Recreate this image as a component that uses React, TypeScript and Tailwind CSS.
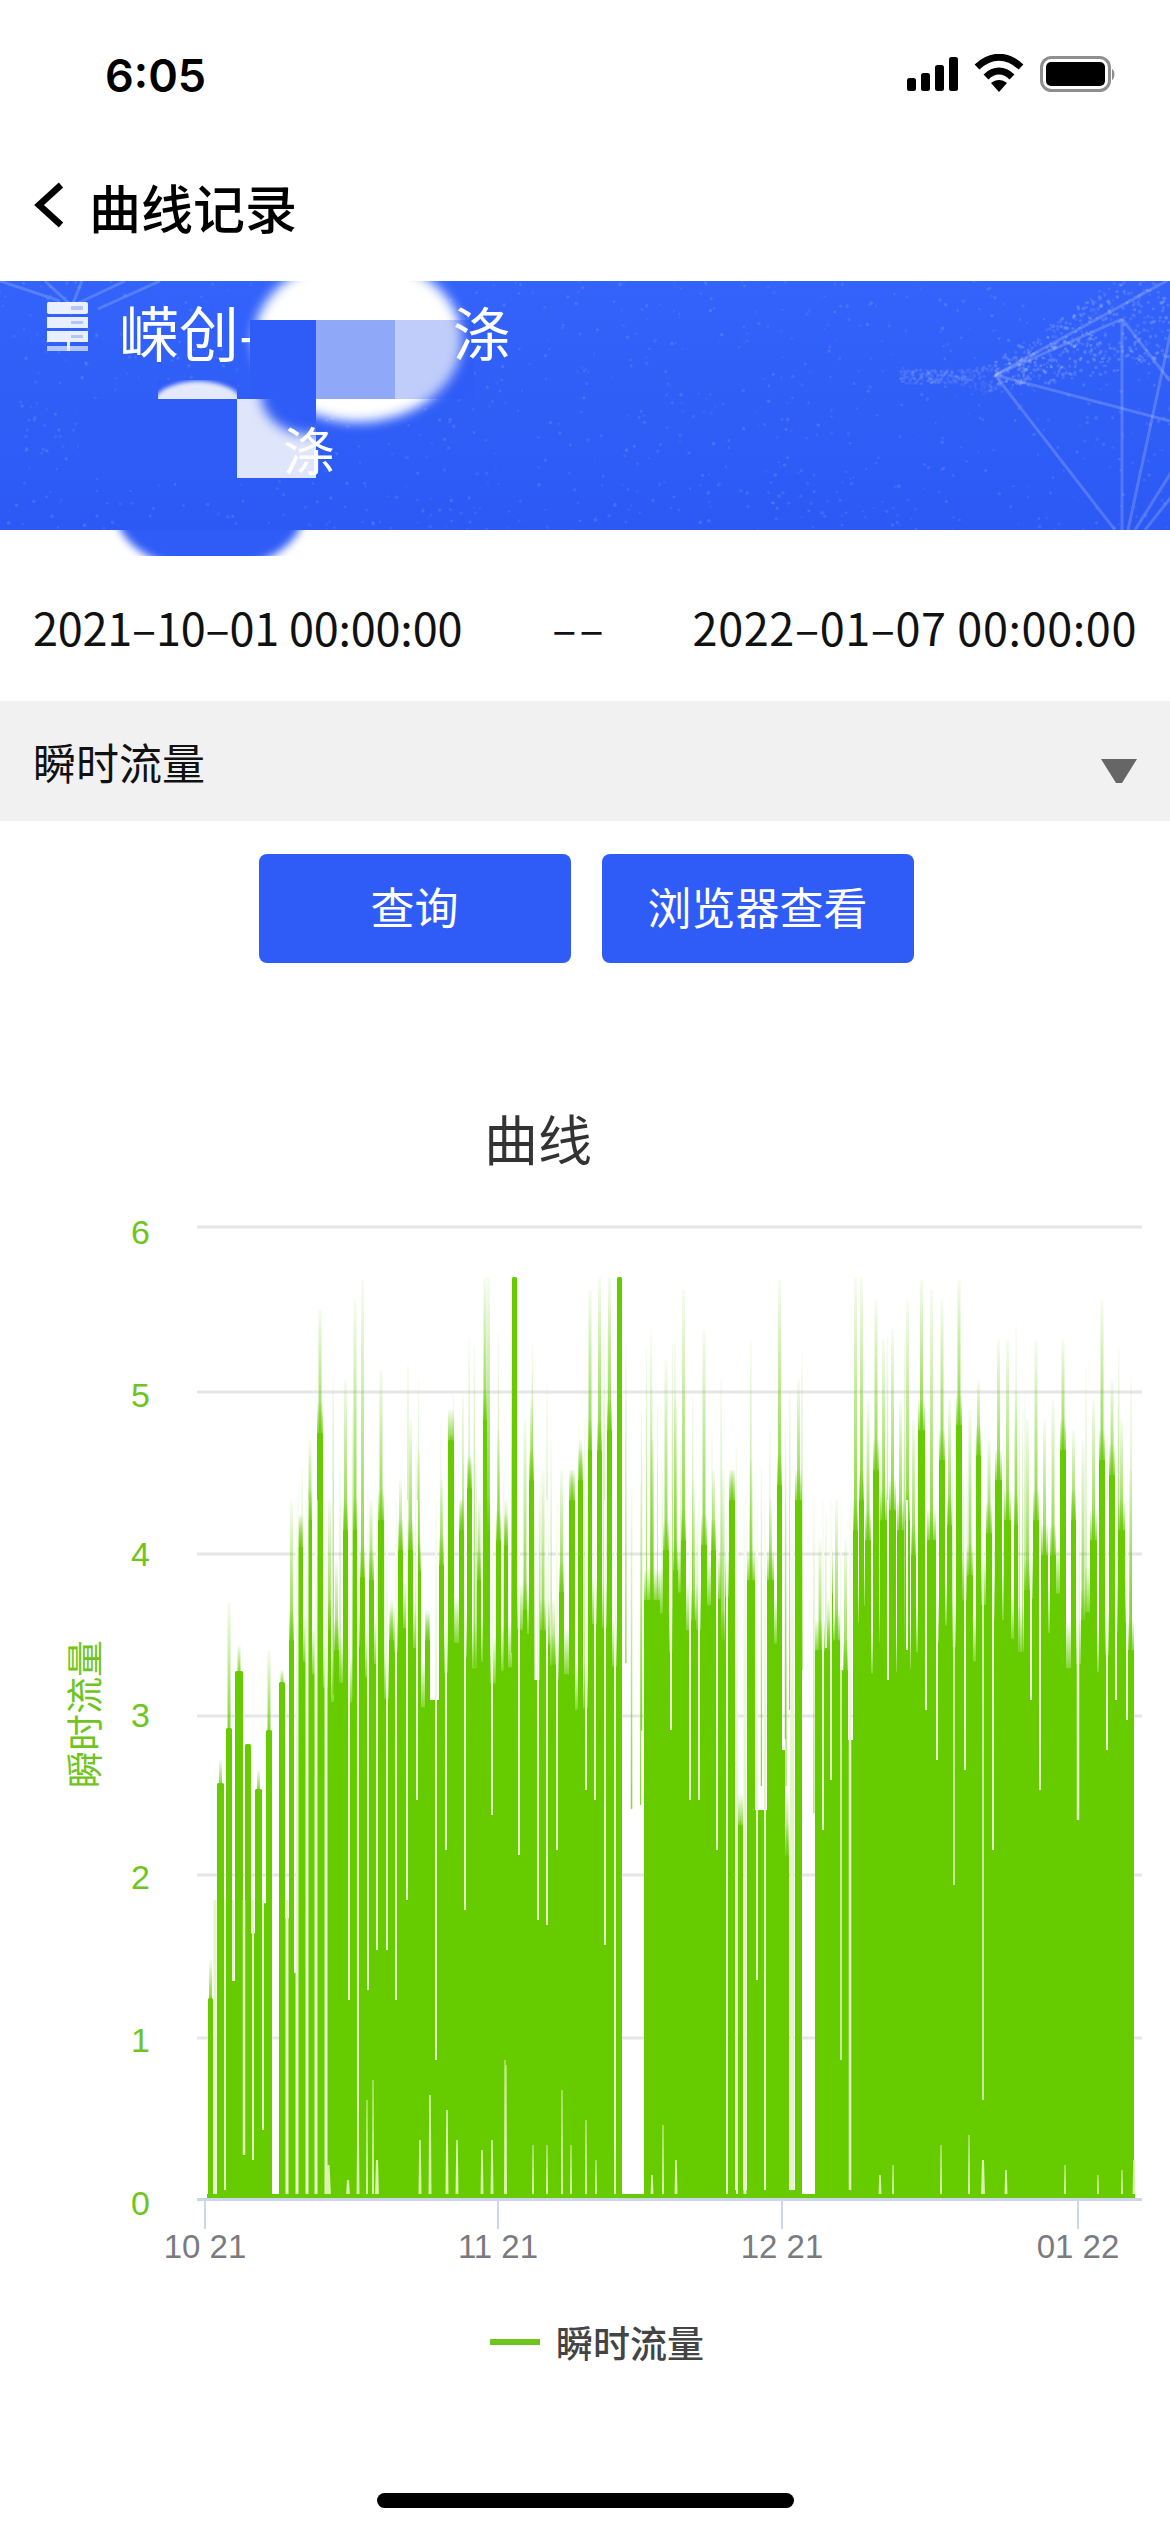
import React from "react";

const FONT = "font-['Noto_Sans_CJK_SC','Noto_Sans',sans-serif]";
const BASE = 2198;

function rng(seed: number) {
  let s = seed;
  return () => {
    s = (s * 1664525 + 1013904223) >>> 0;
    return s / 4294967296;
  };
}

const COLS: number[][] = [
  [208, 213, 1998, 1960], [217, 224, 1783, 1760], [226, 232, 1728, 1602], [235, 243, 1671, 1645],
  [245, 251, 1744, 0], [255, 262, 1789, 1770], [266, 272, 1730, 1650], [279, 285, 1682, 1670],
  [289, 294, 1640, 1500], [298, 303, 1547, 1515], [308, 312, 1520, 1440], [317, 323, 1433, 1310],
  [328, 331, 1630, 1500], [334, 339, 1650, 1560], [343, 348, 1530, 1380], [353, 357, 1530, 1300],
  [360, 365, 1577, 1280], [368, 374, 1580, 1500], [378, 384, 1520, 1370], [389, 394, 1640, 1600],
  [398, 403, 1550, 1480], [408, 413, 1550, 1420], [416, 421, 1570, 1450], [425, 430, 1640, 1615],
  [439, 444, 1565, 1480], [448, 454, 1440, 1435], [459, 464, 1530, 1500], [467, 472, 1488, 1455],
  [477, 481, 1580, 1500], [483, 487, 1420, 1277], [487, 490, 1530, 1277], [496, 501, 1540, 1430],
  [504, 508, 1545, 1500], [512, 517, 1277, 1277], [523, 527, 1610, 1420], [529, 534, 1480, 1400],
  [540, 546, 1630, 1470], [550, 557, 1665, 1600], [559, 564, 1592, 1470], [569, 575, 1500, 1470],
  [578, 583, 1480, 1440], [588, 592, 1450, 1290], [597, 602, 1450, 1277], [607, 612, 1430, 1277],
  [617, 622, 1277, 1277],
  [644, 660, 1600, 1440], [663, 669, 1550, 1360], [673, 678, 1570, 1400], [681, 686, 1540, 1290],
  [691, 696, 1620, 1480], [701, 707, 1545, 1330], [711, 716, 1550, 1470], [721, 725, 1640, 1470],
  [729, 735, 1500, 1470], [737, 743, 1825, 1820], [747, 755, 1580, 1460], [767, 774, 1580, 1500],
  [777, 782, 1485, 1280], [785, 789, 1855, 1790], [795, 802, 1500, 1380], [815, 825, 1650, 1540],
  [827, 830, 1650, 1600], [833, 840, 1640, 1500], [843, 848, 1670, 1540],
  [853, 858, 1530, 1277], [859, 864, 1500, 1277], [865, 871, 1540, 1400], [873, 879, 1470, 1300],
  [880, 887, 1520, 1340], [889, 896, 1510, 1330], [897, 904, 1530, 1400], [905, 910, 1520, 1300],
  [911, 916, 1555, 1420],
  [918, 925, 1430, 1280], [927, 936, 1540, 1290], [939, 945, 1460, 1300], [947, 952, 1525, 1400],
  [956, 962, 1425, 1280], [967, 973, 1575, 1410], [976, 981, 1455, 1380], [986, 992, 1533, 1440],
  [995, 1002, 1480, 1340], [1004, 1011, 1520, 1340], [1014, 1018, 1525, 1390], [1024, 1031, 1590, 1420],
  [1033, 1039, 1520, 1340], [1041, 1048, 1555, 1420], [1050, 1056, 1555, 1400], [1060, 1066, 1450, 1340],
  [1071, 1076, 1520, 1430], [1081, 1085, 1620, 1440], [1090, 1097, 1540, 1400], [1099, 1105, 1460, 1300],
  [1109, 1115, 1475, 1380], [1118, 1125, 1530, 1420], [1127, 1134, 1650, 1470],
];

const GAP_DEPTH: Record<number, number> = {
  213: 2195, 272: 9999, 622: 9999, 735: 2190, 743: 2190, 755: 1810, 782: 1750, 789: 2190, 802: 9999, 825: 1648, 840: 1670, 848: 1740,
  430: 1700, 534: 1680,
};

// deep pale slits: x, bottom y, width
const SLITS: number[][] = [
  [215, 2195, 3], [225, 2190, 2], [233, 1980, 2], [244, 2155, 2.5], [253, 2160, 2], [263, 2130, 2],
  [287, 2195, 3], [297, 2195, 3], [307, 2195, 3], [316, 2195, 3], [326, 2195, 3], [349, 2000, 2],
  [358, 2195, 2], [368, 1990, 2], [377, 1950, 2], [387, 1950, 2], [396, 2000, 2], [407, 1900, 2],
  [417, 1800, 2], [436, 2060, 2], [446, 1850, 2], [465, 1910, 2], [492, 1815, 2], [519, 1855, 2],
  [538, 1920, 2], [547, 1925, 2], [557, 1850, 2], [586, 1790, 2], [595, 1800, 2], [605, 1945, 2],
  [615, 2195, 2], [671, 1730, 2], [690, 1800, 2], [699, 1800, 2], [717, 1850, 2], [727, 2195, 2],
  [737, 2195, 2], [745, 2195, 3], [757, 1980, 2], [765, 2190, 2], [792, 2190, 4],
  [823, 1830, 2], [831, 1780, 2], [841, 2060, 1.5], [850, 2190, 2.5], [888, 1680, 2], [907, 1650, 2],
  [926, 1710, 2], [937, 1760, 2], [954, 1885, 1.5], [965, 1770, 2], [983, 2100, 1.5], [993, 1850, 2],
  [1031, 1700, 2], [1040, 1790, 2], [1078, 1820, 2.5], [1107, 1750, 2], [1116, 1700, 2], [1127, 1720, 2],
];

// pale notches that rise from the baseline: x, top y, width
const NOTCHES: number[][] = [
  [328, 2165, 6], [348, 2180, 4], [358, 2120, 3], [367, 2100, 2], [373, 2080, 2], [377, 2160, 4],
  [420, 2140, 3], [430, 2095, 3], [447, 2110, 3], [457, 2140, 3], [482, 2150, 3], [492, 2140, 3],
  [505, 2060, 2], [506, 2065, 2], [533, 2145, 2], [547, 2145, 2], [562, 2090, 2], [571, 2145, 2],
  [586, 2120, 2], [596, 2160, 2], [615, 2150, 2], [652, 2175, 3], [663, 2125, 2], [676, 2160, 3],
  [880, 2175, 3], [893, 2165, 2], [941, 2145, 2], [969, 2135, 2], [983, 2160, 4], [1006, 2170, 3],
  [1065, 2165, 2], [1098, 2175, 2], [1122, 2170, 2], [1134, 2160, 3],
];

const GRID = [2199.5, 2038, 1875, 1716, 1554, 1392, 1227];
const DIGIT_Y = [2215, 2052, 1889, 1727, 1566, 1407, 1244];

function Chart() {
  const r = rng(73);
  const gaps: React.ReactNode[] = [];
  COLS.forEach((c, i) => {
    const n = COLS[i + 1];
    if (!n) return;
    const w = n[0] - c[1];
    if (w <= 0) return;
    const o = GAP_DEPTH[c[1]];
    const early = c[1] < 296;
    const d = o !== undefined ? o : early ? 1900 + r() * 90 : c[1] < 644 ? 1610 + r() * 100 : 1590 + r() * 90;
    if (d < BASE) {
      gaps.push(<rect key={"g" + i} x={c[1]} y={d} width={w} height={BASE - d} fill="#66cc00" />);
      if (o === undefined && !early) gaps.push(<rect key={"h" + i} x={c[1]} y={d - 45} width={w} height={46} fill="url(#spike)" />);
    }
  });
  const fuzz: number[][] = [];
  for (let i = 0; i < 110; i++) {
    fuzz.push([296 + r() * 838, 1320 + r() * 220, 1 + r() * 0.6]);
  }
  const ticks = [205, 498, 782, 1078];
  const labels = ["10 21", "11 21", "12 21", "01 22"];
  return (
    <svg viewBox="0 1200 1170 1080" className="block h-[1080px] w-[1170px]">
      <defs>
        <linearGradient id="spike" x1="0" y1="0" x2="0" y2="1">
          <stop offset="0" stopColor="#66cc00" stopOpacity="0.05" />
          <stop offset="1" stopColor="#66cc00" stopOpacity="0.8" />
        </linearGradient>
        <linearGradient id="slit" gradientUnits="userSpaceOnUse" x1="0" y1="1450" x2="0" y2="1780">
          <stop offset="0" stopColor="#ffffff" />
          <stop offset="1" stopColor="#e4f6c6" />
        </linearGradient>
      </defs>
      {GRID.map((y, n) => (
        <g key={n}>
          {n > 0 && <line x1={197} x2={1142} y1={y} y2={y} stroke="#e6e6e6" strokeWidth={3} />}
          <text x={150} y={DIGIT_Y[n]} textAnchor="end" fontSize={34} fill="#6fc51d" fontFamily="'Liberation Sans',sans-serif">{n}</text>
        </g>
      ))}
      <text transform="translate(99 1714) rotate(-90)" textAnchor="middle" fontSize={37} fill="#6fc51d" fontFamily="'Noto Sans CJK SC',sans-serif">瞬时流量</text>

      {fuzz.map((f, i) => (
        <rect key={"f" + i} x={f[0]} y={f[1]} width={f[2]} height={320} fill="url(#spike)" />
      ))}
      {COLS.map((c, i) => (
        c[3] > 0 && c[3] < c[2] ? (
          <rect key={"s" + i} x={(c[0] + c[1]) / 2 - 1.5} y={c[3]} width={3} height={c[2] - c[3] + 2} fill="url(#spike)" />
        ) : null
      ))}
      {COLS.map((c, i) => (
        c[2] > 1300 && c[0] > 280 ? (
          <rect key={"t" + i} x={c[0]} y={c[2] - 30} width={c[1] - c[0]} height={32} fill="url(#spike)" />
        ) : null
      ))}
      {gaps}
      {COLS.map((c, i) => (
        <rect key={"c" + i} x={c[0]} y={c[2]} width={c[1] - c[0]} height={BASE - c[2]} rx={1.5} fill="#66cc00" />
      ))}
      {SLITS.map((s, i) => {
        const top = s[0] < 296 ? 1900 : 1500;
        return <rect key={"l" + i} x={s[0] - s[2] / 2} y={top} width={s[2]} height={s[1] - top} fill="url(#slit)" />;
      })}
      {NOTCHES.map((s, i) => (
        <polygon key={"n" + i} points={`${s[0] - s[2] / 2},${BASE - 2} ${s[0] + s[2] / 2},${BASE - 2} ${s[0] + s[2] / 4},${s[1]} ${s[0] - s[2] / 4},${s[1]}`} fill="#d9f3ae" />
      ))}
      <rect x={207} y={2194} width={928} height={5} fill="#66cc00" />
      <line x1={197} x2={1142} y1={2199.5} y2={2199.5} stroke="#ccd6eb" strokeWidth={3} />
      {ticks.map((x, i) => (
        <g key={x}>
          <line x1={x} x2={x} y1={2200} y2={2229} stroke="#ccd6eb" strokeWidth={2} />
          <text x={x} y={2258} textAnchor="middle" fontSize={33} fill="#7a7b80" fontFamily="'Liberation Sans',sans-serif">{labels[i]}</text>
        </g>
      ))}
    </svg>
  );
}

function BannerArt() {
  const r = rng(11);
  const dots: number[][] = [];
  for (let i = 0; i < 900; i++) dots.push([r() * 1170, r() * 249, 1 + r() * 0.9, 0.04 + r() * 0.09]);
  const wave: number[][] = [];
  for (let i = 0; i < 800; i++) {
    const t = r();
    const x = 900 + t * 270;
    const c = 94 - Math.max(0, x - 990) * 0.5;
    const spread = 14 + Math.max(0, x - 960) * 0.5;
    wave.push([x, c + (r() - 0.35) * spread, 1.2 + r() * 0.7, (x < 995 ? 0.03 : 0.06) + r() * (x < 995 ? 0.07 : 0.12)]);
  }
  const lines = [
    [995, 94, 1170, -2], [995, 94, 1115, 249], [995, 94, 1170, 140], [1122, 38, 1122, 249], [1122, 38, 995, 94],
    [1122, 38, 1170, 100], [1172, 45, 1128, 249], [1172, 190, 1135, 249], [1172, 215, 1145, 249],
    [0, 0, 60, 20], [45, 0, 72, 25], [72, 25, 82, 0], [72, 25, 125, 0], [98, 28, 160, 0],
  ];
  return (
    <svg viewBox="0 0 1170 249" className="absolute inset-0 h-full w-full">
      {dots.map((d, i) => <circle key={i} cx={d[0]} cy={d[1]} r={d[2]} fill="#fff" opacity={d[3]} />)}
      {wave.map((d, i) => <circle key={"w" + i} cx={d[0]} cy={d[1]} r={d[2]} fill="#fff" opacity={d[3]} />)}
      {lines.map((l, i) => <line key={"l" + i} x1={l[0]} y1={l[1]} x2={l[2]} y2={l[3]} stroke="#fff" strokeOpacity={0.18} strokeWidth={3} />)}
    </svg>
  );
}

function StatusIcons() {
  return (
    <svg width="210" height="40" viewBox="905 54 210 40" className="mt-[7px] block">
      <rect x="907" y="78" width="9" height="13" rx="2.5" />
      <rect x="921" y="73" width="9" height="18" rx="2.5" />
      <rect x="935" y="65" width="9" height="26" rx="2.5" />
      <rect x="949" y="57" width="9" height="34" rx="2.5" />
      <path d="M977 67 C991 54 1007 54 1021 67" fill="none" stroke="#000" strokeWidth="7" />
      <path d="M986 77 C994 69 1004 69 1012 77" fill="none" stroke="#000" strokeWidth="7" />
      <path d="M991 83 C996 79 1002 79 1007 83 L999 92 Z" />
      <rect x="1041.5" y="57.5" width="68" height="33" rx="10" fill="none" stroke="#8e8e8e" strokeWidth="3" />
      <rect x="1046" y="62" width="59" height="24" rx="5" />
      <path d="M1112 69 C1115 70 1115.5 78 1112 80 Z" fill="#8e8e8e" />
    </svg>
  );
}

export default function App() {
  return (
    <div className={`${FONT} relative h-[2532px] w-[1170px] overflow-hidden bg-white text-black`}>
      <div className="flex h-[146px] items-start justify-between pl-[105px] pr-[55px] pt-[47px]">
        <span className="mt-[3px] font-['Inter',sans-serif] text-[45px] font-semibold leading-[52px]">6:05</span>
        <StatusIcons />
      </div>

      <div className="flex h-[135px] items-start pl-[33px] pt-[33px]">
        <svg width="34" height="52" viewBox="33 182 34 52" className="mr-[22px] shrink-0">
          <path d="M61 188 L39 208 L61 228" fill="none" stroke="#000" strokeWidth="6.5" />
        </svg>
        <span className="text-[52px] font-medium leading-[56px]">曲线记录</span>
      </div>

      <div className="relative h-[249px] overflow-hidden bg-gradient-to-b from-[#3363fa] to-[#2c59f4] text-white">
        <BannerArt />
        <div className="flex items-start pl-[47px] pt-[18px]">
          <svg width="42" height="50" viewBox="0 0 42 50" className="relative z-10 mt-[3px] shrink-0 opacity-90">
            <rect x="0" y="0" width="41" height="12" rx="2" fill="#fff" />
            <rect x="0" y="15" width="41" height="11" fill="#fff" />
            <rect x="0" y="29" width="41" height="11" fill="#fff" />
            <rect x="0" y="44" width="41" height="5" fill="#fff" fillOpacity="0.7" />
            <rect x="20" y="40" width="3" height="9" fill="#fff" />
            <rect x="24" y="4" width="12" height="4" fill="#c3d0fb" />
            <rect x="24" y="19" width="12" height="3" fill="#c3d0fb" />
            <rect x="24" y="33" width="12" height="3" fill="#c3d0fb" />
          </svg>
          <span className="ml-[30px] text-[60px] font-normal leading-[64px]">嵘创-</span>
          <span className="relative z-20 ml-[193px] text-[58px] font-normal leading-[64px]">涤</span>
        </div>
        <div className="relative z-20 ml-[283px] mt-[58px] text-[52px] font-normal leading-[56px]">涤</div>

        <div className="absolute left-[254px] top-[-23px] h-[164px] w-[208px] rounded-[50%] bg-white blur-[6px]" />
        <div className="absolute left-[250px] top-[39px] h-[79px] w-[66px] bg-[#2f5cf6]" />
        <div className="absolute left-[316px] top-[39px] h-[79px] w-[79px] bg-[#8fa9f8]" />
        <div className="absolute left-[395px] top-[39px] h-[79px] w-[79px] overflow-hidden bg-[#2f5cf6]">
          <div className="absolute left-[-141px] top-[-62px] h-[164px] w-[208px] rounded-[50%] bg-[#c0cdfa] blur-[6px]" />
        </div>
        <div className="absolute left-[158px] top-[99px] h-[19px] w-[79px] overflow-hidden bg-[#2f5cf6]">
          <div className="absolute left-[-6px] top-[1px] h-[50px] w-[92px] rounded-[50%] bg-[#e4e9fc] blur-[2px]" />
        </div>
        <div className="absolute left-[79px] top-[118px] h-[79px] w-[158px] bg-[#2f5cf6]" />
        <div className="absolute left-[237px] top-[118px] h-[79px] w-[79px] overflow-hidden bg-[#dfe5fb]">
          <div className="absolute left-[24px] top-[-46px] h-[82px] w-[100px] rounded-[50%] bg-[#2f5cf6] blur-[6px]" />
        </div>
      </div>

      <div className="relative flex h-[171px] items-center justify-between px-[33px] pt-[22px] text-[45px] leading-[52px] text-[#111]">
        <div className="absolute left-[110px] top-0 h-[26px] w-[210px] overflow-hidden">
          <div className="absolute left-[5px] top-[-83px] h-[124px] w-[190px] rounded-[50%] bg-[#2f5cf6] blur-[4px]" />
        </div>
        <span className="tracking-[-0.2px]">2021–10–01 00:00:00</span>
        <span className="ml-[4px] tracking-[3px]">––</span>
        <span className="tracking-[0.6px]">2022–01–07 00:00:00</span>
      </div>

      <div className="flex h-[120px] items-center justify-between bg-[#f1f1f1] pl-[33px] pr-[32px]">
        <span className="text-[43px] leading-[52px] text-[#111]">瞬时流量</span>
        <svg width="38" height="26" viewBox="0 0 38 26" className="mt-[20px]">
          <path d="M1 1 H37 L22 25 H16 Z" fill="#666" />
        </svg>
      </div>

      <div className="mt-[33px] flex justify-center gap-[31px] pl-[2px]">
        <button className="flex h-[109px] w-[312px] items-center justify-center rounded-[8px] bg-[#2f5cf6] pb-[5px] text-[44px] text-white">查询</button>
        <button className="flex h-[109px] w-[312px] items-center justify-center rounded-[8px] bg-[#2f5cf6] pb-[5px] text-[44px] text-white">浏览器查看</button>
      </div>

      <div className="mt-[145px] pl-[484px] text-[54px] leading-[60px] text-[#333]">曲线</div>

      <div className="mt-[32px]">
        <Chart />
      </div>

      <div className="mt-[40px] flex items-center pl-[490px]">
        <div className="h-[6px] w-[50px] bg-[#6fc51d]" />
        <span className="ml-[16px] text-[37px] font-medium leading-[44px] text-[#444]">瞬时流量</span>
      </div>

      <div className="ml-[377px] mt-[129px] h-[15px] w-[417px] rounded-full bg-black" />
    </div>
  );
}
